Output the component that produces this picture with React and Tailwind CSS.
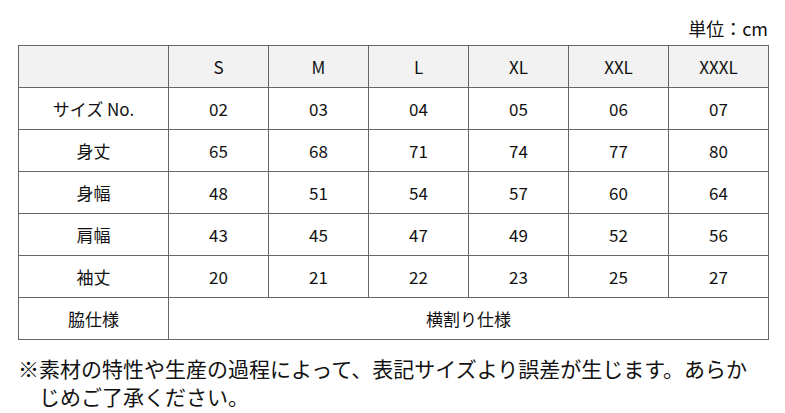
const sizes = ['S', 'M', 'L', 'XL', 'XXL', 'XXXL'];

const rows = [
  { label: 'サイズ No.', values: ['02', '03', '04', '05', '06', '07'] },
  { label: '身丈', values: ['65', '68', '71', '74', '77', '80'] },
  { label: '身幅', values: ['48', '51', '54', '57', '60', '64'] },
  { label: '肩幅', values: ['43', '45', '47', '49', '52', '56'] },
  { label: '袖丈', values: ['20', '21', '22', '23', '25', '27'] },
];

const cell = 'h-[42px] border border-[#666] p-0 text-center align-middle';

export default function App() {
  return (
    <div
      className="min-h-screen bg-white pl-[18px] pr-[17px] pt-[16px] text-[#111]"
      style={{ fontFamily: '"Noto Sans CJK JP", "Noto Sans", sans-serif' }}
    >
      <p className="mb-[5px] text-right text-[18px] leading-[24px]">単位：cm</p>
      <table className="w-[750px] table-fixed border-collapse text-[17px] leading-[24px]">
        <colgroup>
          <col className="w-[150px]" />
          {sizes.map((s) => (
            <col key={s} className="w-[100px]" />
          ))}
        </colgroup>
        <thead>
          <tr className="bg-[#f2f2f2]">
            <th className={`${cell} font-normal`}></th>
            {sizes.map((s) => (
              <th key={s} className={`${cell} font-normal`}>
                {s}
              </th>
            ))}
          </tr>
        </thead>
        <tbody>
          {rows.map((row) => (
            <tr key={row.label}>
              <td className={cell}>{row.label}</td>
              {row.values.map((v, i) => (
                <td key={i} className={cell}>
                  {v}
                </td>
              ))}
            </tr>
          ))}
          <tr>
            <td className={cell}>脇仕様</td>
            <td className={cell} colSpan={6}>
              横割り仕様
            </td>
          </tr>
        </tbody>
      </table>
      <p className="mt-[14px] pl-[1em] -indent-[1em] text-[21px] leading-[28px]">
        ※素材の特性や生産の過程によって、表記サイズより誤差が生じます。あらかじめご了承ください。
      </p>
    </div>
  );
}
